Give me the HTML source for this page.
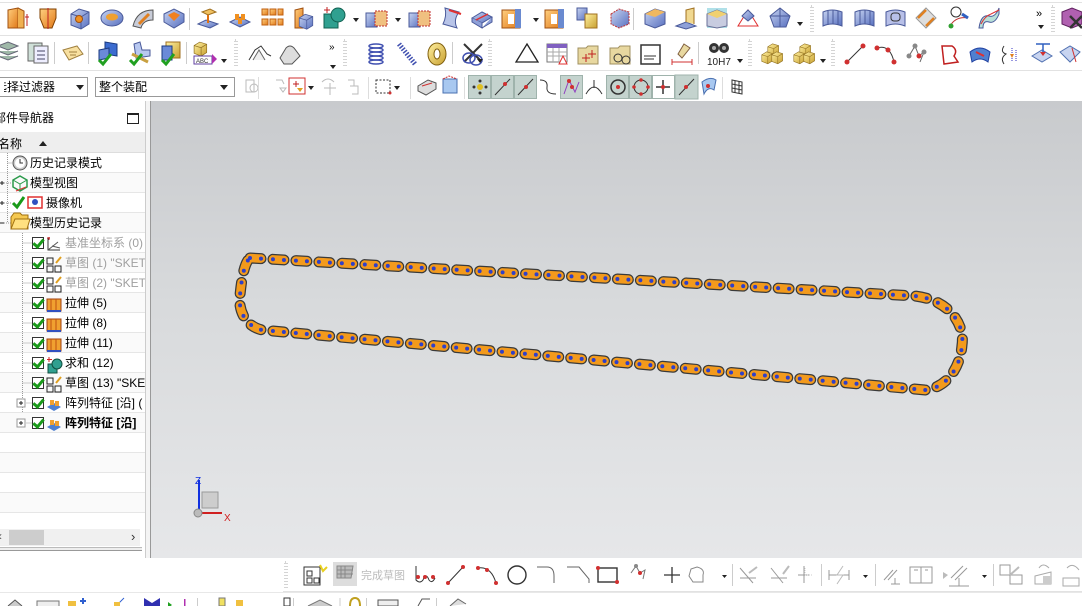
<!DOCTYPE html>
<html><head><meta charset="utf-8">
<style>
*{margin:0;padding:0;box-sizing:border-box}
body{width:1082px;height:606px;overflow:hidden;background:#fff;position:relative;font-family:"Liberation Sans","Noto Sans CJK SC",sans-serif;font-size:12px;color:#000}
.a{position:absolute}
.dd{position:absolute;width:0;height:0;border-left:3px solid transparent;border-right:3px solid transparent;border-top:4px solid #222}
.row{position:absolute;left:0;width:145px;height:20px;border-bottom:1px solid #e6e6e6;font-size:12px;line-height:20px;white-space:nowrap;overflow:hidden}
.cb{position:absolute;width:12px;height:12px;border:1px solid #333;background:#fff;top:4px}
.cb:after{content:"";position:absolute;left:2px;top:-1px;width:4px;height:8px;border:solid #1a9a1a;border-width:0 3px 3px 0;transform:rotate(40deg)}
</style></head><body>

<div class="a" style="left:0;top:2px;width:1082px;height:1px;background:#e2e2e2"></div>
<div class="a" style="left:0;top:35px;width:1082px;height:1px;background:#e2e2e2"></div>
<div class="a" style="left:0;top:70px;width:1082px;height:1px;background:#e2e2e2"></div>

<svg class="a" style="left:0;top:0" width="1082" height="100">
<defs>
<linearGradient id="bl" x1="0" y1="0" x2="1" y2="1"><stop offset="0" stop-color="#c8d4f0"/><stop offset="1" stop-color="#5870c0"/></linearGradient>
<linearGradient id="or" x1="0" y1="0" x2="1" y2="1"><stop offset="0" stop-color="#ffd080"/><stop offset="1" stop-color="#e07818"/></linearGradient>
<linearGradient id="ye" x1="0" y1="0" x2="1" y2="1"><stop offset="0" stop-color="#fff0a0"/><stop offset="1" stop-color="#c8a030"/></linearGradient>
<g id="cube"><path d="M3 8 L11 3 L21 6 L21 18 L13 23 L3 19 Z" fill="url(#bl)" stroke="#4a5a9a" stroke-width="1"/><path d="M3 8 L13 11 L21 6 M13 11 L13 23" fill="none" stroke="#4a5a9a"/></g>
<g id="ycube"><path d="M3 8 L11 3 L21 6 L21 18 L13 23 L3 19 Z" fill="url(#ye)" stroke="#907020"/><path d="M3 8 L13 11 L21 6 M13 11 L13 23" fill="none" stroke="#907020"/></g>
<g id="surf"><path d="M3 6 Q12 2 22 6 L22 20 Q12 16 3 20 Z" fill="url(#bl)" stroke="#4a5a9a"/><path d="M8 5 L8 19 M13 4 L13 18 M18 5 L18 19" stroke="#4a5a9a" fill="none"/></g>
</defs>
<g transform="translate(6,6)"><path d="M2 4 L12 2 L12 22 L2 22Z" fill="url(#or)" stroke="#a05010"/><path d="M12 2 L18 5 L18 22 L12 22" fill="#f0b050" stroke="#a05010"/><path d="M21 8 V20 M19 11 H23" stroke="#c02020"/></g>
<g transform="translate(36,6)"><path d="M4 3 H20 V12 L16 22 H8 L4 12Z" fill="url(#or)" stroke="#804000"/><path d="M12 2 V23" stroke="#c02020"/></g>
<use href="#cube" x="68" y="6"/><circle cx="79" cy="19" r="3.5" fill="#f09020" stroke="#a05010"/>
<g transform="translate(100,6)"><ellipse cx="12" cy="12" rx="11" ry="8" fill="url(#bl)" stroke="#4a5a9a"/><ellipse cx="12" cy="11" rx="6" ry="3.5" fill="#f0a030"/></g>
<g transform="translate(131,6)"><path d="M2 20 Q6 4 22 4 L22 14 Q12 14 10 22Z" fill="#c8ccd8" stroke="#555"/><path d="M8 18 L18 8" stroke="#e08020" stroke-width="3"/></g>
<g transform="translate(162,6)"><path d="M2 8 L12 3 L22 8 L22 16 L12 22 L2 16Z" fill="url(#bl)" stroke="#4a5a9a"/><path d="M6 9 L12 15 L18 9 L12 6Z" fill="#f08020"/></g>
<rect x="189" y="8" width="1" height="22" fill="#ccc"/>
<g transform="translate(196,6)"><path d="M2 18 L10 14 L22 18 L14 22Z" fill="url(#bl)" stroke="#4a5a9a"/><path d="M6 6 L14 3 L20 6 L12 9Z" fill="#f0c060" stroke="#a07020"/><path d="M12 9 V17" stroke="#e07010" stroke-width="2"/></g>
<g transform="translate(228,6)"><path d="M2 16 L12 11 L22 16 L12 21Z" fill="url(#bl)" stroke="#4a5a9a"/><g fill="#f09020"><rect x="7" y="8" width="4" height="6"/><rect x="13" y="8" width="4" height="6"/><rect x="10" y="12" width="4" height="6"/></g></g>
<g transform="translate(260,6)" fill="url(#or)" stroke="#c06010"><rect x="2" y="3" width="6" height="6"/><rect x="10" y="3" width="6" height="6"/><rect x="18" y="3" width="5" height="6"/><rect x="2" y="13" width="6" height="6"/><rect x="10" y="13" width="6" height="6"/><rect x="18" y="13" width="5" height="6"/></g>
<g transform="translate(291,6)"><path d="M4 4 L12 2 L12 22 L4 22Z" fill="url(#or)" stroke="#a05010"/><use href="#cube" transform="translate(6,6) scale(.75)"/></g>
<g transform="translate(322,6)"><rect x="2" y="8" width="14" height="14" fill="#30a090" stroke="#106050"/><circle cx="16" cy="9" r="7" fill="#30a090" stroke="#106050"/><path d="M5 1 V7 M2 4 H8" stroke="#c02020"/></g>
<path d="M353 18 h6 l-3 4z" fill="#222"/>
<g transform="translate(365,8)"><rect x="1" y="5" width="11" height="14" fill="url(#bl)" stroke="#4a5a9a"/><rect x="10" y="3" width="12" height="15" fill="#f0c080" stroke="#c03030" stroke-dasharray="2 1"/></g>
<path d="M395 18 h6 l-3 4z" fill="#222"/>
<g transform="translate(408,8)"><rect x="1" y="5" width="11" height="14" fill="url(#bl)" stroke="#4a5a9a"/><rect x="10" y="3" width="12" height="15" fill="#f0c080" stroke="#c03030" stroke-dasharray="2 1"/></g>
<g transform="translate(439,6)"><path d="M6 2 L20 6 Q14 14 18 22 L4 18 Q8 10 6 2Z" fill="#b8c4e8" stroke="#4a5a9a"/><path d="M10 4 L22 8" stroke="#e03030" stroke-width="2"/></g>
<g transform="translate(470,8)"><path d="M2 10 L12 4 L22 9 L12 15Z" fill="url(#bl)" stroke="#4a5a9a"/><path d="M2 10 V14 L12 20 V15 M12 20 L22 14 V9" fill="#8ea0d8" stroke="#4a5a9a"/><path d="M6 12 L18 6" stroke="#e03030" stroke-width="1.5"/></g>
<g transform="translate(500,6)"><rect x="2" y="4" width="18" height="18" fill="url(#or)" stroke="#a05010"/><rect x="8" y="8" width="6" height="10" fill="#fff"/><rect x="15" y="3" width="6" height="19" fill="#6a8ad0"/></g>
<path d="M533 18 h6 l-3 4z" fill="#222"/>
<g transform="translate(543,6)"><rect x="2" y="4" width="18" height="18" fill="url(#or)" stroke="#a05010"/><rect x="8" y="8" width="6" height="10" fill="#fff"/><rect x="15" y="3" width="6" height="19" fill="#6a8ad0"/></g>
<g transform="translate(575,6)"><rect x="2" y="2" width="10" height="12" fill="url(#bl)" stroke="#4a5a9a"/><rect x="10" y="8" width="12" height="14" fill="url(#ye)" stroke="#a07020"/></g>
<g transform="translate(607,6)"><path d="M4 8 L12 3 L22 6 L22 18 L12 22 L4 18Z" fill="url(#bl)" stroke="#c03030" stroke-dasharray="2 1"/></g>
<rect x="633" y="8" width="1" height="22" fill="#ccc"/>
<g transform="translate(643,6)"><path d="M2 8 L12 3 L22 6 L22 18 L12 22 L2 18Z" fill="url(#bl)" stroke="#4a5a9a"/><path d="M2 8 L12 11 L22 6 L12 3Z" fill="#f0b860"/></g>
<g transform="translate(674,6)"><path d="M2 20 L12 16 L22 20 L12 23Z" fill="#8ea0d8" stroke="#4a5a9a"/><path d="M12 16 L12 4 L20 2 L20 18" fill="#f0d890" stroke="#a07020"/></g>
<g transform="translate(705,6)"><rect x="2" y="2" width="20" height="20" fill="#b0e0e8"/><path d="M2 8 L12 4 L22 8 L22 20 L12 22 L2 20Z" fill="#c8cce0" stroke="#6a7098"/><path d="M2 8 L12 12 L22 8 L12 4Z" fill="#f0d070"/></g>
<g transform="translate(736,6)"><path d="M12 4 L22 20 H2Z" fill="none" stroke="#e03030"/><path d="M6 10 L12 4 L18 10 L12 15Z" fill="url(#bl)" stroke="#4a5a9a"/></g>
<g transform="translate(768,6)"><path d="M12 2 L22 10 L18 21 L6 21 L2 10Z" fill="url(#bl)" stroke="#4a5a9a"/><path d="M2 10 L22 10 M12 2 L12 21" stroke="#4a5a9a" fill="none"/></g>
<path d="M797 22 h6 l-3 4z" fill="#222"/>
<rect x="811" y="6" width="2" height="26" fill="none" stroke="#aaa" stroke-dasharray="1 2"/>
<use href="#surf" x="820" y="6"/><use href="#surf" x="852" y="6"/>
<g transform="translate(883,6)"><path d="M3 6 Q12 2 22 6 L22 20 Q12 16 3 20 Z" fill="#b8c0e8" stroke="#4a5a9a"/><rect x="8" y="7" width="9" height="8" rx="3" fill="none" stroke="#333"/></g>
<g transform="translate(914,6)"><path d="M2 12 L12 2 L22 12 L12 22Z" fill="#ddd" stroke="#999"/><path d="M4 12 L12 4 M12 20 L20 12" stroke="#e08020" stroke-width="2.5"/></g>
<g transform="translate(946,6)"><circle cx="10" cy="6" r="5" fill="none" stroke="#333"/><path d="M4 20 Q10 10 22 12" fill="none" stroke="#c03030"/><circle cx="5" cy="20" r="2.5" fill="#30a030"/><path d="M16 8 L22 12" stroke="#3060c0" stroke-width="3"/></g>
<g transform="translate(977,6)"><path d="M2 22 Q4 8 12 10 Q18 12 22 2 L22 8 Q18 18 12 16 Q6 14 6 22Z" fill="#b8e0d8" stroke="#4a5a9a"/><path d="M4 18 Q8 10 14 8 L22 4" fill="none" stroke="#e03030"/></g>
<text x="1036" y="17" font-size="11" font-family="Liberation Sans">»</text>
<path d="M1038 25 h6 l-3 4z" fill="#222"/>
<rect x="1052" y="6" width="2" height="26" fill="none" stroke="#aaa" stroke-dasharray="1 2"/>
<g transform="translate(1060,6)"><path d="M2 6 L12 2 L22 6 L22 18 L12 22 L2 18Z" fill="#b060b0" stroke="#602060"/><path d="M10 10 L22 22 M22 10 L10 22" stroke="#333" stroke-width="2.5"/></g>

<g transform="translate(-4,40)"><path d="M2 6 L12 2 L22 6 L12 10Z M2 11 L12 15 L22 11 M2 16 L12 20 L22 16" fill="#9fb8a8" stroke="#667"/></g>
<g transform="translate(26,40)"><rect x="2" y="3" width="14" height="18" fill="#cfe0d8" stroke="#666"/><rect x="8" y="6" width="14" height="17" fill="#eef" stroke="#666"/><path d="M11 11 h8 M11 15 h8 M11 19 h8" stroke="#446"/></g>
<rect x="54" y="42" width="1" height="22" fill="#ccc"/>
<g transform="translate(61,42)"><path d="M2 8 L16 4 L22 12 L8 18Z" fill="#f8e0a0" stroke="#a08040"/><path d="M8 10 h8 M9 13 h6" stroke="#a08040"/></g>
<rect x="88" y="42" width="1" height="22" fill="#ccc"/>
<g transform="translate(97,40)"><path d="M8 2 L20 4 L20 16 L8 14Z" fill="#3c6cd0" stroke="#1a3a80"/><path d="M2 10 L12 8 L12 18 L2 20Z" fill="#6a8ad8" stroke="#1a3a80"/><path d="M2 20 L6 24 L14 14" stroke="#20a020" stroke-width="3" fill="none"/></g>
<g transform="translate(128,40)"><path d="M6 4 L12 2 L14 10 L22 10 L22 16 L8 18Z" fill="#b8c8f0" stroke="#4a5a9a"/><path d="M4 14 L20 22" stroke="#c8a040" stroke-width="3"/><path d="M2 20 L6 24 L14 14" stroke="#20a020" stroke-width="3" fill="none"/></g>
<g transform="translate(160,40)"><rect x="6" y="2" width="14" height="16" fill="url(#ye)" stroke="#a07020"/><rect x="2" y="6" width="10" height="14" fill="#6a8ad8" stroke="#1a3a80"/><path d="M2 20 L6 24 L14 14" stroke="#20a020" stroke-width="3" fill="none"/></g>
<rect x="186" y="42" width="1" height="22" fill="#ccc"/>
<g transform="translate(192,40)"><use href="#ycube" transform="scale(.7)"/><rect x="2" y="16" width="18" height="8" fill="#fff" stroke="#6040a0"/><text x="4" y="23" font-size="6" fill="#333">ABC</text><path d="M20 14 L25 19 L20 24Z" fill="#b030b0"/></g>
<path d="M221 59 h6 l-3 4z" fill="#222"/>
<rect x="235" y="40" width="2" height="26" fill="none" stroke="#aaa" stroke-dasharray="1 2"/>
<g transform="translate(247,42)"><path d="M2 18 L8 8 L14 4 L20 12 L24 14" fill="none" stroke="#333"/><path d="M6 18 L12 8 L18 18" fill="#eee" stroke="#666"/></g>
<g transform="translate(278,42)"><path d="M2 16 L8 6 Q12 2 16 6 L22 14 L14 22 L6 22Z" fill="#ddd" stroke="#555"/></g>
<text x="329" y="50" font-size="10">»</text><path d="M330 65 h6 l-3 4z" fill="#222"/>
<rect x="344" y="40" width="2" height="26" fill="none" stroke="#aaa" stroke-dasharray="1 2"/>
<g transform="translate(364,42)" fill="none" stroke="#4050b0" stroke-width="1.5"><ellipse cx="12" cy="4" rx="7" ry="2"/><ellipse cx="12" cy="8" rx="7" ry="2"/><ellipse cx="12" cy="12" rx="7" ry="2"/><ellipse cx="12" cy="16" rx="7" ry="2"/><ellipse cx="12" cy="20" rx="7" ry="2"/></g>
<g transform="translate(395,42)"><path d="M4 2 L20 22" stroke="#4050b0" stroke-width="5" stroke-dasharray="1.5 1.5"/></g>
<g transform="translate(425,42)"><ellipse cx="12" cy="12" rx="9" ry="11" fill="url(#ye)" stroke="#806010"/><ellipse cx="12" cy="12" rx="3" ry="5" fill="#fff" stroke="#806010"/></g>
<rect x="452" y="42" width="1" height="22" fill="#ccc"/>
<g transform="translate(460,42)"><path d="M4 2 L22 20 M22 2 L4 20" stroke="#333" stroke-width="2"/><ellipse cx="9" cy="16" rx="6" ry="5" fill="none" stroke="#4050b0" stroke-width="1.5"/><ellipse cx="16" cy="18" rx="6" ry="5" fill="none" stroke="#4050b0" stroke-width="1.5"/></g>
<path d="M477 59 h6 l-3 4z" fill="#222"/>
<rect x="489" y="40" width="2" height="26" fill="none" stroke="#aaa" stroke-dasharray="1 2"/>
<path d="M527 44 L538 62 L516 62Z" fill="none" stroke="#222" stroke-width="1.3"/>
<g transform="translate(545,42)"><rect x="2" y="2" width="20" height="18" fill="#fff" stroke="#777"/><rect x="2" y="2" width="20" height="4" fill="#8060c0"/><path d="M2 10 h20 M2 14 h20 M8 6 v14 M14 6 v14" stroke="#aaa"/><path d="M18 14 L22 22 H14Z" fill="#fff" stroke="#e03030"/></g>
<g transform="translate(576,42)"><path d="M2 6 L10 6 L12 4 L22 4 L22 22 L2 22Z" fill="#e8d8a0" stroke="#a09060"/><path d="M6 16 h8 M10 12 v8 M12 12 h8 M16 8 v8" stroke="#c02020"/></g>
<g transform="translate(608,42)"><path d="M2 6 L10 6 L12 4 L22 4 L22 22 L2 22Z" fill="#e8d8a0" stroke="#a09060"/><circle cx="10" cy="16" r="4" fill="none" stroke="#333"/><circle cx="18" cy="18" r="4" fill="none" stroke="#333"/></g>
<g transform="translate(639,42)"><rect x="2" y="3" width="19" height="19" fill="#fff" stroke="#333" stroke-width="1.5"/><path d="M5 14 h12 M5 17 h10" stroke="#333"/></g>
<g transform="translate(670,42)"><path d="M14 2 L20 6 L12 16 L8 12Z" fill="#e8d8a0" stroke="#806040"/><path d="M2 20 h20 M2 17 v6 M22 17 v6" stroke="#d03030"/></g>
<rect x="698" y="42" width="1" height="22" fill="#ccc"/>
<g transform="translate(706,40)"><circle cx="8" cy="8" r="5" fill="#333"/><circle cx="18" cy="8" r="5" fill="#333"/><circle cx="8" cy="8" r="2" fill="#aaa"/><circle cx="18" cy="8" r="2" fill="#aaa"/><text x="1" y="25" font-size="10" font-family="Liberation Sans" fill="#222">10H7</text></g>
<path d="M737 59 h6 l-3 4z" fill="#222"/>
<rect x="749" y="40" width="2" height="26" fill="none" stroke="#aaa" stroke-dasharray="1 2"/>
<g transform="translate(760,42)"><use href="#ycube" transform="translate(6,0) scale(.6)"/><use href="#ycube" transform="translate(0,8) scale(.6)"/><use href="#ycube" transform="translate(10,8) scale(.6)"/></g>
<g transform="translate(792,42)"><use href="#ycube" transform="translate(6,0) scale(.6)"/><use href="#ycube" transform="translate(0,8) scale(.6)"/><use href="#ycube" transform="translate(10,8) scale(.6)"/></g>
<path d="M820 59 h6 l-3 4z" fill="#222"/>
<rect x="832" y="40" width="2" height="26" fill="none" stroke="#aaa" stroke-dasharray="1 2"/>
<g transform="translate(843,42)"><path d="M4 20 L20 4" stroke="#333"/><circle cx="4" cy="20" r="2.5" fill="#d03030"/><circle cx="20" cy="4" r="2.5" fill="#d03030"/></g>
<g transform="translate(874,42)"><path d="M3 6 Q16 2 20 20" fill="none" stroke="#333"/><circle cx="3" cy="6" r="2.5" fill="#d03030"/><circle cx="14" cy="8" r="2.5" fill="#d03030"/><circle cx="20" cy="20" r="2.5" fill="#d03030"/></g>
<g transform="translate(906,42)"><path d="M3 14 L9 4 L13 14 L18 10 L14 20" fill="none" stroke="#666"/><circle cx="9" cy="4" r="2.5" fill="#888"/><circle cx="3" cy="14" r="2.5" fill="#888"/><circle cx="13" cy="14" r="2.5" fill="#d03030"/><circle cx="18" cy="10" r="2.5" fill="#888"/></g>
<path d="M942 46 L952 46 Q958 50 954 56 L958 62 L944 64 Z" fill="none" stroke="#c02020" stroke-width="1.5"/>
<g transform="translate(968,42)"><path d="M2 10 Q12 2 22 10 L20 20 Q12 14 4 20Z" fill="#5080d0" stroke="#2040a0"/><path d="M8 10 L16 14" stroke="#e03030" stroke-width="2"/></g>
<g transform="translate(1000,42)"><path d="M4 4 Q0 10 6 12 Q0 16 4 22" fill="none" stroke="#333"/><path d="M12 6 V20 M16 8 V20" stroke="#3030c0" stroke-dasharray="1 1"/><path d="M10 12 L12 16 L14 12" fill="#e08020"/></g>
<g transform="translate(1030,42)"><path d="M2 14 L12 8 L22 14 L12 20Z" fill="#c8d4f0" stroke="#5070b0"/><path d="M6 2 H20 M13 2 V12" stroke="#3060c0" stroke-width="1.5"/><path d="M10 10 L13 14 L16 10Z" fill="#d03030"/></g>
<g transform="translate(1058,42)"><path d="M2 10 L12 4 L22 10 L12 20Z" fill="#c8d4f0" stroke="#5070b0"/><path d="M14 6 L18 20" stroke="#d03030"/></g>
</svg>

<div class="a" style="left:-2px;top:77px;width:90px;height:20px;border:1px solid #999;background:#fff;font-size:12px;line-height:18px;overflow:hidden;white-space:nowrap;text-indent:-4px">选择过滤器</div>
<div class="a" style="left:0;top:78px;width:4px;height:18px;background:#fff"></div>
<div class="dd" style="left:76px;top:85px;border-top-width:5px;border-left-width:4px;border-right-width:4px"></div>
<div class="a" style="left:95px;top:77px;width:140px;height:20px;border:1px solid #999;background:#fff;font-size:12px;line-height:18px;padding-left:3px">整个装配</div>
<div class="dd" style="left:220px;top:85px;border-top-width:5px;border-left-width:4px;border-right-width:4px"></div>
<svg class="a" style="left:238px;top:74px" width="844" height="27">
<g stroke="#bbb" fill="none"><rect x="8" y="6" width="8" height="12"/><circle cx="16" cy="14" r="4"/></g>
<rect x="20" y="3" width="1" height="22" fill="#ddd"/>
<g stroke="#bbb" fill="none"><path d="M38 6 L44 6 L46 10 M42 14 h6 l-3 4z"/></g>
<rect x="51" y="4" width="16" height="16" fill="#fff" stroke="#d03030"/><path d="M55 10 h6 M58 7 v6" stroke="#c02020"/><path d="M59 14 h6 l-3 4z" fill="#e0a020"/>
<path d="M70 12 h6 l-3 4z" fill="#222"/>
<g stroke="#bbb" fill="none"><path d="M84 8 Q90 2 96 8 M86 14 h12 M92 9 v12"/><path d="M110 6 h6 v6 h4 v8 h-6 M112 12 h4"/></g>
<rect x="130" y="3" width="1" height="22" fill="#ddd"/>
<rect x="138" y="6" width="14" height="13" fill="none" stroke="#333" stroke-dasharray="2 1.5"/><circle cx="152" cy="19" r="1.5" fill="#d03030"/>
<path d="M156 12 h6 l-3 4z" fill="#222"/>
<rect x="172" y="3" width="1" height="22" fill="#ddd"/>
<path d="M180 12 L190 6 L198 9 L198 15 L188 21 L180 17Z" fill="#ddd" stroke="#555"/><path d="M184 12 L194 9" stroke="#d03030"/>
<rect x="205" y="5" width="14" height="14" fill="#a8c8f0" stroke="#4a70b0"/><path d="M205 5 L211 2 L219 5" fill="none" stroke="#d03030" stroke-dasharray="2 1"/>
<rect x="226" y="3" width="1" height="22" fill="#ddd"/>
<rect x="230" y="1" width="184" height="24" fill="#c4d3ce"/>
<g stroke="#9fb3ac" fill="none"><rect x="230.5" y="1.5" width="22" height="23"/><rect x="253.5" y="1.5" width="22" height="23"/><rect x="276.5" y="1.5" width="22" height="23"/><rect x="322.5" y="1.5" width="22" height="23"/><rect x="368.5" y="1.5" width="22" height="23"/><rect x="391.5" y="1.5" width="22" height="23"/></g>
<rect x="299" y="1" width="23" height="24" fill="#fff"/><rect x="345" y="1" width="23" height="24" fill="#fff"/><rect x="414" y="1" width="30" height="24" fill="#fff"/>
<g><circle cx="242" cy="13" r="3" fill="#e0c020"/><circle cx="236" cy="13" r="1.5" fill="#333"/><circle cx="248" cy="13" r="1.5" fill="#333"/><circle cx="242" cy="7" r="1.5" fill="#333"/><circle cx="242" cy="19" r="1.5" fill="#333"/></g>
<path d="M257 21 L272 5" stroke="#333"/><circle cx="267" cy="10" r="2" fill="#d03030"/>
<path d="M280 21 L295 5" stroke="#333"/><circle cx="288" cy="13" r="2" fill="#d03030"/>
<path d="M302 6 Q310 6 309 13 Q308 20 318 20" fill="none" stroke="#333"/>
<path d="M326 20 L331 6 L337 18 L341 8" fill="none" stroke="#9040c0"/><circle cx="331" cy="7" r="2" fill="#d03030"/><circle cx="334" cy="13" r="2" fill="#d03030"/>
<path d="M348 20 Q356 6 364 20 M356 6 V14" fill="none" stroke="#333"/>
<circle cx="380" cy="13" r="7" fill="none" stroke="#333" stroke-width="1.5"/><circle cx="380" cy="13" r="2" fill="#d03030"/>
<circle cx="403" cy="13" r="7" fill="none" stroke="#333"/><circle cx="403" cy="6" r="1.8" fill="#d03030"/><circle cx="396" cy="13" r="1.8" fill="#d03030"/><circle cx="410" cy="13" r="1.8" fill="#d03030"/><circle cx="403" cy="20" r="1.8" fill="#d03030"/>
<path d="M418 13 h14 M425 6 v14" stroke="#333" stroke-width="1.5"/><circle cx="425" cy="13" r="2" fill="#d03030"/>
<rect x="414.5" y="1.5" width="22" height="23" fill="none" stroke="#9fb3ac"/>
<rect x="437" y="1" width="23" height="24" fill="#c4d3ce" stroke="#9fb3ac"/><path d="M441 21 L456 5" stroke="#333"/><circle cx="448" cy="13" r="2" fill="#d03030"/>
<path d="M464 8 Q472 2 478 6 L476 16 Q470 12 466 20Z" fill="#a8c8f0" stroke="#4a70b0"/><circle cx="470" cy="12" r="2" fill="#d03030"/>
<rect x="484" y="3" width="1" height="22" fill="#ddd"/>
<path d="M494 6 L504 8 L504 20 L494 18Z M494 10 L504 12 M494 14 L504 16 M497 7 V19 M501 7 V19" fill="none" stroke="#333"/>
</svg>

<div class="a" style="left:0;top:101px;width:146px;height:457px;background:#fff"></div>
<div class="a" style="left:-6px;top:109px;font-size:12px">部件导航器</div>
<div class="a" style="left:127px;top:113px;width:12px;height:11px;border:1.5px solid #222;border-top-width:2px"></div>
<div class="a" style="left:0;top:132px;width:145px;height:21px;background:#eeeeee;border-bottom:1px solid #ddd"></div>
<div class="a" style="left:-2px;top:135px;font-size:12px">名称</div>
<div class="a" style="left:39px;top:141px;width:0;height:0;border-left:4px solid transparent;border-right:4px solid transparent;border-bottom:5px solid #222"></div>
<div class="a" style="left:145px;top:101px;width:6px;height:457px;background:#f4f4f4;border-left:1px solid #ccc;border-right:1px solid #999"></div>

<div class="row" style="top:153px"><span class="a" style="left:30px">历史记录模式</span></div>
<div class="row" style="top:173px;background:#fafafa"><span class="a" style="left:30px">模型视图</span></div>
<div class="row" style="top:193px"><span class="a" style="left:46px">摄像机</span></div>
<div class="row" style="top:213px;background:#fafafa"><span class="a" style="left:30px">模型历史记录</span></div>
<div class="row" style="top:233px"><div class="cb" style="left:32px"></div><span class="a" style="left:65px;color:#a0a0a0">基准坐标系 (0)</span></div>
<div class="row" style="top:253px;background:#fafafa"><div class="cb" style="left:32px"></div><span class="a" style="left:65px;color:#a0a0a0">草图 (1) "SKET</span></div>
<div class="row" style="top:273px"><div class="cb" style="left:32px"></div><span class="a" style="left:65px;color:#a0a0a0">草图 (2) "SKET</span></div>
<div class="row" style="top:293px;background:#fafafa"><div class="cb" style="left:32px"></div><span class="a" style="left:65px">拉伸 (5)</span></div>
<div class="row" style="top:313px"><div class="cb" style="left:32px"></div><span class="a" style="left:65px">拉伸 (8)</span></div>
<div class="row" style="top:333px;background:#fafafa"><div class="cb" style="left:32px"></div><span class="a" style="left:65px">拉伸 (11)</span></div>
<div class="row" style="top:353px"><div class="cb" style="left:32px"></div><span class="a" style="left:65px">求和 (12)</span></div>
<div class="row" style="top:373px;background:#fafafa"><div class="cb" style="left:32px"></div><span class="a" style="left:65px">草图 (13) "SKE</span></div>
<div class="row" style="top:393px"><div class="cb" style="left:32px"></div><span class="a" style="left:65px">阵列特征 [沿] (</span></div>
<div class="row" style="top:413px;background:#fafafa"><div class="cb" style="left:32px"></div><span class="a" style="left:65px;font-weight:bold">阵列特征 [沿]</span></div>
<div class="row" style="top:433px"></div>
<div class="row" style="top:453px;background:#fafafa"></div>
<div class="row" style="top:473px"></div>
<div class="row" style="top:493px;background:#fafafa"></div>
<div class="a" style="left:0;top:529px;width:140px;height:17px;background:#f0f0f0"></div>
<div class="a" style="left:9px;top:530px;width:35px;height:15px;background:#cdcdcd"></div>
<div class="a" style="left:-2px;top:529px;font-size:12px;color:#555">‹</div>
<div class="a" style="left:131px;top:529px;font-size:13px;color:#333">›</div>
<div class="a" style="left:0;top:547px;width:142px;height:4px;border-top:1px solid #bbb;border-bottom:1px solid #999;background:#eee"></div>

<svg class="a" style="left:0;top:153px" width="146" height="280">
<g stroke="#999" stroke-dasharray="1 1" fill="none"><path d="M7.5 0 V70 M7.5 10 H12 M2 30 H12 M2 50 H12 M2 70 H12 M22.5 80 V260 M22.5 90 H32 M22.5 110 H32 M22.5 130 H32 M22.5 150 H32 M22.5 170 H32 M22.5 190 H32 M22.5 210 H32 M22.5 230 H32 M22.5 250 H32 M22.5 270 H32"/></g>
<circle cx="20" cy="10" r="7" fill="#ccc" stroke="#555"/><circle cx="20" cy="10" r="5" fill="#fff"/><path d="M20 6 V10 H23" stroke="#333" fill="none"/>
<g transform="translate(12,22)"><path d="M8 1 L15 5 L15 12 L8 16 L1 12 L1 5Z" fill="none" stroke="#2a9a4a" stroke-width="1.5"/><path d="M1 5 L8 9 L15 5 M8 9 V16" stroke="#2a9a4a" fill="none"/><path d="M4 16 L14 12" stroke="#e03030"/></g>
<path d="M0 30 H4 M0 50 H4 M0 70 H4" stroke="#222"/><path d="M2 28 V32 M2 48 V52" stroke="#222"/>
<path d="M13 50 L17 54 L24 44" stroke="#1a9a1a" stroke-width="3" fill="none"/>
<g transform="translate(27,41)"><rect x="1" y="3" width="14" height="11" fill="#fff" stroke="#e03030" stroke-width="1.5"/><circle cx="8" cy="8" r="3" fill="#3050c0"/></g>
<path d="M11 64 L14 60 H20 L22 62 H28 V76 H11Z" fill="#f5c850" stroke="#a07010"/><path d="M11 76 L15 66 H30 L27 76Z" fill="#ffe080" stroke="#a07010"/>
<g transform="translate(46,83)"><path d="M2 2 V14 H14" stroke="#333" fill="none"/><path d="M2 14 L12 6 M6 10 L14 12" stroke="#555" fill="none"/><path d="M3 1 V4 M1 2 H4" stroke="#c02020"/></g>
<g transform="translate(46,103)" fill="none" stroke="#222"><rect x="1" y="2" width="6" height="6"/><rect x="1" y="10" width="6" height="6"/><rect x="9" y="10" width="6" height="6"/><path d="M10 7 L15 1" stroke="#e0a020" stroke-width="2"/></g>
<g transform="translate(46,123)" fill="none" stroke="#222"><rect x="1" y="2" width="6" height="6"/><rect x="1" y="10" width="6" height="6"/><rect x="9" y="10" width="6" height="6"/><path d="M10 7 L15 1" stroke="#e0a020" stroke-width="2"/></g>
<g transform="translate(46,143)"><rect x="1" y="3" width="14" height="12" fill="#f0a030" stroke="#a04010"/><path d="M5 3 V15 M10 3 V15" stroke="#c05010"/><path d="M1 15 H15" stroke="#3050c0" stroke-width="2"/></g>
<g transform="translate(46,163)"><rect x="1" y="3" width="14" height="12" fill="#f0a030" stroke="#a04010"/><path d="M5 3 V15 M10 3 V15" stroke="#c05010"/><path d="M1 15 H15" stroke="#3050c0" stroke-width="2"/></g>
<g transform="translate(46,183)"><rect x="1" y="3" width="14" height="12" fill="#f0a030" stroke="#a04010"/><path d="M5 3 V15 M10 3 V15" stroke="#c05010"/><path d="M1 15 H15" stroke="#3050c0" stroke-width="2"/></g>
<g transform="translate(46,203)"><rect x="2" y="8" width="9" height="9" fill="#30a090" stroke="#105040"/><circle cx="11" cy="8" r="5" fill="#30a090" stroke="#105040"/><path d="M3 1 V6 M1 3.5 H6" stroke="#d02020"/></g>
<g transform="translate(46,223)" fill="none" stroke="#222"><rect x="1" y="2" width="6" height="6"/><rect x="1" y="10" width="6" height="6"/><rect x="9" y="10" width="6" height="6"/><path d="M10 7 L15 1" stroke="#e0a020" stroke-width="2"/></g>
<g transform="translate(46,243)"><path d="M1 11 L8 7 L15 11 L8 15Z" fill="#5080d0"/><rect x="4" y="4" width="4" height="5" fill="#f0a030"/><rect x="9" y="5" width="4" height="5" fill="#f0a030"/></g>
<g transform="translate(46,263)"><path d="M1 11 L8 7 L15 11 L8 15Z" fill="#5080d0"/><rect x="4" y="4" width="4" height="5" fill="#f0a030"/><rect x="9" y="5" width="4" height="5" fill="#f0a030"/></g>
<rect x="17" y="246" width="8" height="8" fill="#fff" stroke="#999"/><path d="M19 250 h4 M21 248 v4" stroke="#222"/>
<rect x="17" y="266" width="8" height="8" fill="#fff" stroke="#999"/><path d="M19 270 h4 M21 268 v4" stroke="#222"/>
</svg>

<div class="a" style="left:151px;top:101px;width:931px;height:457px;background:linear-gradient(#c8cacd,#d8dadc 45%,#e6e7e9)"></div>
<svg class="a" style="left:151px;top:101px" width="931" height="457">
<g transform="translate(-151,-101)" fill="none" stroke-linecap="round">
<path d="M250,258 L915,296 C950,300 965,325 962,345 C960,370 945,388 925,390 L262,330 C245,326 238,310 240,295 C242,275 245,262 250,258 Z" stroke="#3a3a3a" stroke-width="11" stroke-dasharray="11 12"/>
<path d="M250,258 L915,296 C950,300 965,325 962,345 C960,370 945,388 925,390 L262,330 C245,326 238,310 240,295 C242,275 245,262 250,258 Z" stroke="#f39a1c" stroke-width="8.5" stroke-dasharray="11 12"/>
<path d="M250,258 L915,296 C950,300 965,325 962,345 C960,370 945,388 925,390 L262,330 C245,326 238,310 240,295 C242,275 245,262 250,258 Z" stroke="#3040c8" stroke-width="4" stroke-dasharray="0 11 0 12"/>
</g>
<g transform="translate(-151,-101)">
<rect x="202" y="492" width="16" height="16" fill="#c8c8c8" stroke="#888" opacity=".8"/>
<path d="M199 513 V480" stroke="#1030e0" stroke-width="2"/><text x="195" y="484" font-size="10" fill="#1030e0" font-family="Liberation Sans">Z</text>
<path d="M199 513 H222" stroke="#d02020" stroke-width="2"/><text x="224" y="521" font-size="10" fill="#d02020" font-family="Liberation Sans">X</text>
<circle cx="198" cy="513" r="4" fill="#bbb" stroke="#888"/>
</g>
</svg>

<svg class="a" style="left:283px;top:558px" width="799" height="34">
<rect x="0" y="0" width="799" height="34" fill="#fff"/>
<rect x="0" y="33" width="799" height="1" fill="#e2e2e2"/>
<rect x="2" y="4" width="2" height="26" fill="none" stroke="#aaa" stroke-dasharray="1 2"/>
<g transform="translate(20,5)" fill="none" stroke="#333"><rect x="1" y="4" width="16" height="18"/><rect x="4" y="8" width="5" height="5"/><rect x="4" y="15" width="5" height="5"/><rect x="11" y="15" width="5" height="5"/><path d="M17 2 L20 8 L24 4" stroke="#e8d020" stroke-width="2"/></g>
<rect x="50" y="4" width="24" height="24" fill="#ddd"/><path d="M54 8 L70 8 L68 20 L54 20Z" fill="#bbb" stroke="#888"/><path d="M58 8 v12 M62 8 v12 M54 12 h16 M54 16 h16" stroke="#888"/>
<text x="78" y="21" font-size="11" fill="#bbb">完成草图</text>
<path d="M133 8 V22 Q137 26 140 22 Q143 14 146 22 Q149 26 152 20" fill="none" stroke="#333"/><circle cx="135" cy="19" r="2" fill="#d03030"/><circle cx="142" cy="19" r="2" fill="#d03030"/><circle cx="150" cy="19" r="2" fill="#d03030"/>
<path d="M165 25 L180 9" stroke="#333"/><circle cx="165" cy="25" r="2" fill="#d03030"/><circle cx="180" cy="9" r="2" fill="#d03030"/>
<path d="M195 10 Q208 8 213 25" fill="none" stroke="#333"/><circle cx="195" cy="10" r="2" fill="#d03030"/><circle cx="204" cy="12" r="2" fill="#d03030"/><circle cx="213" cy="25" r="2" fill="#d03030"/>
<circle cx="234" cy="17" r="9" fill="none" stroke="#333" stroke-width="1.4"/>
<path d="M254 9 H264 Q271 9 271 18 V25" fill="none" stroke="#666"/>
<path d="M284 9 H296 L306 21 V25" fill="none" stroke="#666"/>
<rect x="315" y="10" width="19" height="14" fill="none" stroke="#333" stroke-width="1.4"/><circle cx="315" cy="10" r="2" fill="#d03030"/><circle cx="334" cy="24" r="2" fill="#d03030"/>
<path d="M348 15 L353 8 L357 15 L362 12 L360 21" fill="none" stroke="#777"/><circle cx="357" cy="15" r="2" fill="#d03030"/><circle cx="353" cy="8" r="2" fill="#888"/>
<path d="M381 17 h16 M389 9 v16" stroke="#333" stroke-width="1.3"/>
<path d="M408 11 L414 9 Q422 11 420 17 L420 24 H410 L406 18Z" fill="none" stroke="#888"/>
<path d="M439 17 h5 l-2.5 3z" fill="#222"/>
<rect x="449" y="6" width="1" height="22" fill="#ccc"/>
<path d="M457 10 L470 25 M457 20 H473" stroke="#999" fill="none"/><path d="M466 15 L474 9" stroke="#bbb" stroke-width="2"/>
<path d="M488 10 L500 25 M488 20 H504" stroke="#999" fill="none"/><path d="M500 16 L506 8" stroke="#bbb" stroke-width="2"/>
<path d="M515 17 h12 M521 8 v17" stroke="#999" fill="none"/><path d="M522 17 h8 M522 10 v7" stroke="#ccc" stroke-dasharray="1 1"/>
<rect x="538" y="6" width="1" height="22" fill="#ccc"/>
<path d="M546 12 V22 M566 12 V22 M546 17 H566" stroke="#999" fill="none"/><path d="M560 8 L554 17 L560 17 L554 26" stroke="#bbb" fill="none"/>
<path d="M580 17 h5 l-2.5 3z" fill="#222"/>
<rect x="592" y="6" width="1" height="22" fill="#ccc"/>
<path d="M601 22 L610 12 M605 22 L614 12 M608 26 H617 M612 20 v6" stroke="#999" fill="none"/>
<path d="M627 9 H649 V25 H627Z M638 9 V25 M631 12 L635 12 M642 12 L645 12" stroke="#999" fill="none"/>
<path d="M660 14 L665 17 L660 21Z" fill="#bbb"/><path d="M668 20 L680 8 M672 22 L684 10 M666 28 H686 M676 20 v8" stroke="#999" fill="none"/>
<path d="M699 17 h5 l-2.5 3z" fill="#222"/>
<rect x="710" y="6" width="1" height="22" fill="#ccc"/>
<rect x="717" y="7" width="10" height="10" fill="none" stroke="#999"/><rect x="727" y="17" width="12" height="9" fill="none" stroke="#999"/><path d="M727 17 L736 9" stroke="#bbb" stroke-width="2"/>
<path d="M752 18 L768 14 L768 26 L752 26Z M756 10 Q760 4 766 10" fill="none" stroke="#aaa"/><rect x="760" y="18" width="8" height="8" fill="#ccc"/>
<path d="M780 20 H796 V28 H780Z M784 10 Q790 4 796 12" fill="none" stroke="#aaa"/>
</svg>

<div class="a" style="left:0;top:592px;width:1082px;height:1px;background:#e8e8e8"></div>
<svg class="a" style="left:0;top:596px" width="500" height="10">
<path d="M8 10 L15 4 L22 10" fill="#ccc" stroke="#555"/>
<rect x="37" y="5" width="22" height="6" fill="#eee" stroke="#777"/>
<rect x="68" y="5" width="8" height="6" fill="#f0c040"/><path d="M80 5 h6 M83 2 v6" stroke="#3060d0" stroke-width="2"/>
<path d="M118 8 L124 2" stroke="#3060d0"/><rect x="114" y="6" width="6" height="5" fill="#f0c040"/>
<path d="M144 2 L152 7 L160 2 V10 H144Z" fill="#3030b0"/>
<path d="M168 6 L172 9 L168 12Z" fill="#20a020"/><rect x="184" y="3" width="1.5" height="7" fill="#b030b0"/>
<rect x="197" y="2" width="1" height="8" fill="#ccc"/>
<rect x="219" y="2" width="6" height="8" fill="#f0e060" stroke="#777"/><rect x="236" y="4" width="7" height="6" fill="#f0c040"/>
<rect x="284" y="2" width="6" height="8" fill="none" stroke="#333"/>
<rect x="293" y="2" width="1" height="8" fill="#ccc"/>
<path d="M308 10 L320 4 L332 10" fill="#ccc" stroke="#777"/>
<path d="M340 10 V2" stroke="#ccc"/>
<path d="M350 10 Q350 2 355 2 Q360 2 360 10" fill="none" stroke="#c0a020" stroke-width="2"/>
<rect x="366" y="2" width="1" height="8" fill="#ccc"/>
<rect x="378" y="4" width="20" height="6" fill="#eee" stroke="#555"/>
<path d="M418 10 L422 3 H430" fill="none" stroke="#555"/>
<rect x="436" y="2" width="1" height="8" fill="#ccc"/>
<path d="M450 10 L458 3 L466 8" fill="#ddd" stroke="#666"/>
</svg>
</body></html>
